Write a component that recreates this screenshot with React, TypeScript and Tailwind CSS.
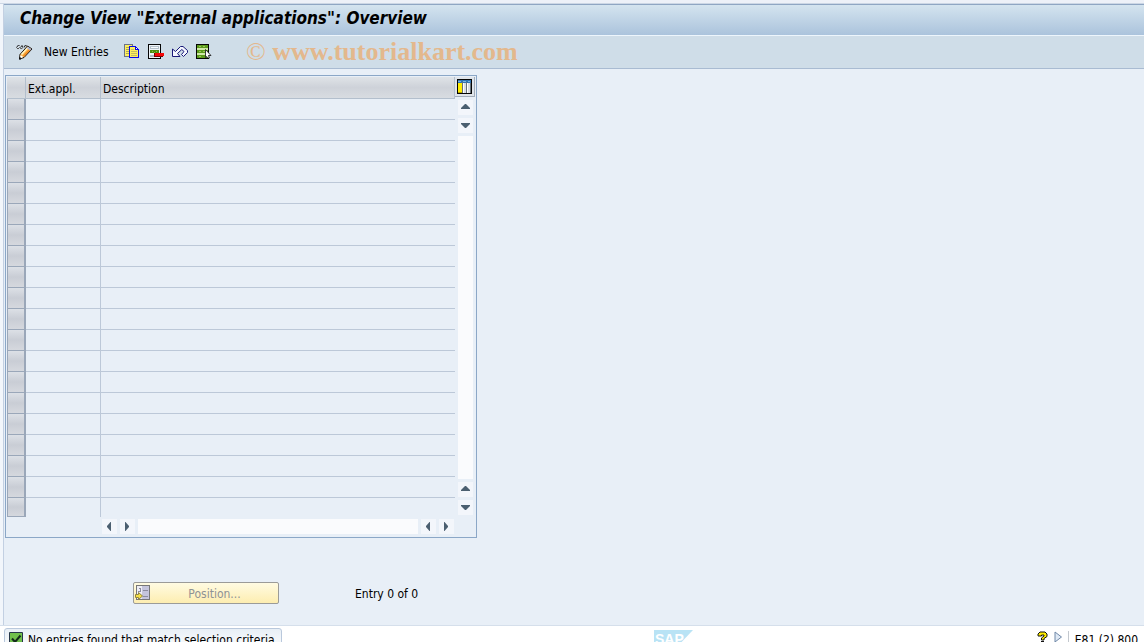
import type { ReactNode } from "react";

function Glyph({ children, w = 16, h = 16 }: { children: ReactNode; w?: number; h?: number }) {
  return (
    <svg aria-hidden="true" width={w} height={h} viewBox={`0 0 ${w} ${h}`} className="block shrink-0">
      {children}
    </svg>
  );
}

function ChangeIcon() {
  return (
    <Glyph w={17}>
      <path d="M0.500 3.500L2.500 1L3.500 2M4.500 3.500L6 1.500L7 3M8 3.500L9.500 1L11 2.500" fill="none" stroke="#222" strokeWidth="1" />
      <path d="M0.500 3.500q1.500 3 3 0q1.500 2.500 3.500 0" fill="none" stroke="#555" strokeWidth="1" />
      <path d="M4 10.500L11.500 2L16 5L8 13.500L3.500 15Z" fill="#ffb347" stroke="#111" strokeWidth="1" />
      <path d="M5.500 10.500L12 3.500" stroke="#fff6c8" strokeWidth="1.500" />
      <path d="M7.500 12.300L14 5.500" stroke="#f08a24" strokeWidth="1.500" />
      <path d="M12 2.700L15.400 5L14 6.500L10.800 4Z" fill="#a9b3d6" />
      <path d="M4.500 11L7.300 13L4 14.500Z" fill="#fff" />
      <path d="M3 13.500h2v2h-2z" fill="#111" />
    </Glyph>
  );
}

function CopyIcon() {
  return (
    <Glyph>
      <g shapeRendering="crispEdges">
        <path d="M0 0h9v13H0z" fill="#6b7486" />
        <path d="M1 1h7v11H1z" fill="#fff05c" />
        <path d="M2 3h3v1H2zM2 5h3v1H2zM2 7h3v1H2zM2 9h3v1H2z" fill="#aaa55c" />
        <path d="M5 2h7v1h1v1h1v1h1v9H5z" fill="#0808e8" />
        <path d="M6 3h5v3h3v7H6z" fill="#fff05c" />
        <path d="M12 4h1v1h-1z" fill="#fff" />
        <path d="M7 5h3v1H7zM7 7h6v1H7zM7 9h6v1H7zM7 11h6v1H7z" fill="#c4bd62" />
      </g>
    </Glyph>
  );
}

function DeleteIcon() {
  return (
    <Glyph>
      <g shapeRendering="crispEdges">
        <path d="M0 0h13v15H0z" fill="#050505" />
        <path d="M1 1h11v13H1z" fill="#edf3f7" />
        <path d="M2 2h9v3H2z" fill="#b5c1cb" />
        <path d="M3 3h7v1H3z" fill="#f8fbfd" />
        <path d="M2 6h9v3H2z" fill="#4c8d0d" />
        <path d="M4 7h1v1H4zM6 8h1v1H6zM8 7h1v1H8z" fill="#91bd44" />
        <path d="M2 11h5v2H2z" fill="#aeb9c2" />
        <path d="M6 9h9v4H6z" fill="#700" />
        <path d="M7 9h9v3H7z" fill="#f40808" />
      </g>
    </Glyph>
  );
}

function UndoIcon() {
  return (
    <Glyph>
      <path
        d="M0.500 12.500V5L3.500 7.500L8.500 2.500H11L15.500 6.500V8.500L11.500 12.500L9.500 10.500L12 7.500L9.800 5.500L5.500 9.500L8 12.500Z"
        fill="#f5f7ff"
        stroke="#191978"
        strokeWidth="1"
      />
    </Glyph>
  );
}

function SelectAllIcon() {
  return (
    <Glyph>
      <g shapeRendering="crispEdges">
        <path d="M0 0h13v15H0z" fill="#050505" />
        <path d="M1 1h11v13H1z" fill="#cfe8a6" />
        <path d="M1 1h11v3H1zM1 6h11v3H1zM1 11h11v3H1z" fill="#5b9a1c" />
        <path d="M3 2h2v1H3zM7 2h2v1H7zM3 7h2v1H3zM7 7h2v1H7zM3 12h2v1H3z" fill="#9cc75a" />
      </g>
      <path d="M9.500 5.500L15 11.500H12.500L13.500 14H11.500L10.800 12.500L9.500 13.500Z" fill="#fff" stroke="#111" strokeWidth="0.800" />
    </Glyph>
  );
}

function ColumnsIcon() {
  return (
    <Glyph w={15} h={15}>
      <g shapeRendering="crispEdges">
        <path d="M0 0h15v15H0z" fill="#050505" />
        <path d="M1 1h13v13H1z" fill="#d9dee3" />
        <path d="M1 1h13v3H1z" fill="#2e75b6" />
        <path d="M1 2h3v1H1zM6 2h3v1H6zM11 2h2v1h-2z" fill="#79b4dc" />
        <path d="M1 4h4v9H1z" fill="#ffed00" />
        <path d="M1 13h4v1H1z" fill="#b8a400" />
        <path d="M5 3h1v11H5zM9 3h1v11H9zM13 4h1v10h-1z" fill="#66717a" />
        <path d="M6 4h1v10H6zM10 4h1v10h-1z" fill="#fff" />
      </g>
    </Glyph>
  );
}

function PositionIcon() {
  return (
    <Glyph>
      <g shapeRendering="crispEdges">
        <path d="M1 0h14v15H1z" fill="#777" />
        <path d="M2 1h12v13H2z" fill="#c5c5dd" />
        <path d="M2 1h5v13H2z" fill="#eeeef5" />
        <path d="M4 3h2v1H4zM5 4h1v3H5zM3 6h2v1H3zM8 5h5v1H8zM8 11h5v1H8z" fill="#8c8ca0" />
      </g>
      <path d="M0.500 9.500H3.500V7.500L7.500 11L3.500 14.500V12.500H0.500Z" fill="#f5df45" stroke="#8f8340" strokeWidth="1" />
    </Glyph>
  );
}

const arrows = {
  up: "M3 9V8L7 4H8L12 8V9Z",
  down: "M3 5V6L7 10H8L12 6V5Z",
  left: "M9 3V12H8.500L5 8V7L8.500 3Z",
  right: "M5 3V12H5.500L9 8V7L5.500 3Z",
};

function ScrollButton({ dir }: { dir: keyof typeof arrows }) {
  return (
    <button type="button" aria-label={`Scroll ${dir}`} className="size-[15px] shrink-0 bg-[#f3f6fb]">
      <Glyph w={15} h={15}>
        <path d={arrows[dir]} fill="#4b5f70" />
      </Glyph>
    </button>
  );
}

const tools = [
  { label: "Copy As", icon: <CopyIcon /> },
  { label: "Delete", icon: <DeleteIcon /> },
  { label: "Undo", icon: <UndoIcon /> },
  { label: "Select All", icon: <SelectAllIcon /> },
];

const rows = Array.from({ length: 20 }, (_, i) => i);

const headCell =
  "h-[22px] border-r border-b border-[#b3bfcd] bg-linear-to-b from-[#dfe3e7] via-[#ced2d9] to-[#d8dce1] p-0 pt-0.5 text-left font-normal";

export default function App() {
  return (
    <div className="flex h-screen flex-col overflow-hidden bg-white font-['DejaVu_Sans_Condensed','DejaVu_Sans',sans-serif] text-[12px] leading-4 text-black">
      <div className="h-1 shrink-0 border-b border-[#ccd7e5] bg-[#edf1f8]" />
      <div className="flex min-h-0 flex-1 flex-col border-b border-[#d5dfeb] bg-[#f2f6fb] pl-[3px]">
        <div className="flex min-h-0 flex-1 flex-col border-l border-[#c3d0e2] bg-[#e8eff7]">
          <header className="flex h-8 shrink-0 items-center border-t border-b border-t-[#8fa6c3] border-b-[#edf5fc] bg-linear-to-b from-[#d4e4ef] to-[#abc3dc] pb-1 pl-4">
            <h1 className="text-[17px] leading-5 font-bold whitespace-nowrap italic">
              Change View "External applications": Overview
            </h1>
          </header>
          <div role="toolbar" aria-label="Application" className="flex h-[33px] shrink-0 items-center border-b border-[#a9bbd2] bg-[#cfdde8] pl-3">
            <button type="button" aria-label="Display / Change" className="w-4">
              <ChangeIcon />
            </button>
            <button type="button" className="ml-3 w-20 text-left whitespace-nowrap">
              New Entries
            </button>
            <div className="flex gap-2">
              {tools.map((t) => (
                <button key={t.label} type="button" aria-label={t.label}>
                  {t.icon}
                </button>
              ))}
            </div>
            <span className="ml-[34px] font-['Liberation_Serif',serif] text-[26px] leading-8 whitespace-nowrap text-[#e3b88d]">
              © <b>www.tutorialkart.com</b>
            </span>
          </div>

          <main className="min-h-0 flex-1 pt-1.5 pl-px">
            <section className="w-[472px] border border-[#8ba7c7] p-px pb-[3px]">
              <div className="flex">
                <table className="w-[448px] table-fixed border-separate border-spacing-0">
                  <colgroup>
                    <col className="w-[19px]" />
                    <col className="w-[75px]" />
                    <col />
                  </colgroup>
                  <thead>
                    <tr>
                      <th className={headCell} aria-label="Row selector" />
                      <th className={headCell}>
                        <span className="pl-0.5">Ext.appl.</span>
                      </th>
                      <th className={headCell}>
                        <span className="pl-0.5">Description</span>
                      </th>
                    </tr>
                  </thead>
                  <tbody>
                    {rows.map((r) => (
                      <tr key={r} className={r < 19 ? "h-[21px]" : "h-[19px]"}>
                        <td className="border-r-2 border-b border-l border-[#9aa7b9] bg-linear-to-b from-[#dce0e6] via-[#c9cdd5] to-[#d5d8de] p-0" />
                        <td className={r < 19 ? "border-r border-b border-[#bcc8d8] p-0" : "border-r border-[#bcc8d8] p-0"} />
                        <td className={r < 19 ? "border-b border-[#bcc8d8] p-0" : "p-0"} />
                      </tr>
                    ))}
                  </tbody>
                </table>
                <div className="flex w-5 flex-col items-center gap-[3px] pb-0.5">
                  <button type="button" aria-label="Table settings" className="flex h-5 w-full shrink-0 items-center justify-center border-r border-b border-[#a2adba] bg-[#dfe4ea]">
                    <ColumnsIcon />
                  </button>
                  <ScrollButton dir="up" />
                  <ScrollButton dir="down" />
                  <div className="w-[15px] flex-1 bg-[#fafbfd]" />
                  <ScrollButton dir="up" />
                  <ScrollButton dir="down" />
                </div>
              </div>
              <div className="mt-0.5 flex gap-[3px] pr-[21px] pl-[95px]">
                <ScrollButton dir="left" />
                <ScrollButton dir="right" />
                <div className="h-[15px] flex-1 bg-[#fafbfd]" />
                <ScrollButton dir="left" />
                <ScrollButton dir="right" />
              </div>
            </section>

            <div className="mt-11 flex items-center gap-[76px] pl-32">
              <button
                type="button"
                disabled
                className="flex h-[22px] w-[146px] items-center rounded-[2px] border border-[#9b9b98] bg-linear-to-b from-[#fffbe2] to-[#fdedb0] pl-px text-[#8f9294]"
              >
                <PositionIcon />
                <span className="flex-1 pt-px text-center">Position...</span>
              </button>
              <span className="pt-px whitespace-nowrap">Entry 0 of 0</span>
            </div>
          </main>
        </div>
      </div>

      <footer className="flex h-4 shrink-0 items-start overflow-hidden bg-white pl-1">
        <div className="mt-0.5 flex h-6 w-[278px] shrink-0 gap-[5px] rounded-t-[3px] border border-[#b9c8dc] bg-linear-to-b from-[#e8eff6] to-white pt-[3px] pl-1">
          <Glyph w={14} h={14}>
            <path d="M0.500 0.500h13v13H0.500z" fill="#70c04c" stroke="#26364a" />
            <path d="M3 6.500L6 10L11.500 3.500" fill="none" stroke="#132a1b" strokeWidth="2" />
          </Glyph>
          <span className="whitespace-nowrap">No entries found that match selection criteria</span>
        </div>
        <svg role="img" aria-label="SAP" width="39" height="20" viewBox="0 0 39 20" className="mt-1 ml-auto shrink-0">
          <path d="M0 0H39L20 20H0Z" fill="#b9e3f5" />
          <text x="1" y="14" fill="#fff" className="font-['Liberation_Sans',sans-serif] text-[14px] font-bold">
            SAP
          </text>
        </svg>
        <div className="ml-[344px] flex shrink-0 pt-[5px] pr-1.5">
          <Glyph w={11} h={14}>
            <path d="M1 4.500V3L3 1H8L10 3V5.500L7 7.500V9H4.500V7L7 5V4H4.500V5H1Z" fill="#ffed00" stroke="#111" />
            <path d="M4 10h3v3H4z" fill="#111" />
          </Glyph>
          <div className="ml-1.5">
            <Glyph w={9} h={12}>
              <path d="M1 1V11L7.500 6Z" fill="#dfe9f5" stroke="#7189a8" />
            </Glyph>
          </div>
          <span className="ml-[5px] border-l border-[#c3c8ce] pt-px pl-1.5 whitespace-nowrap">E81 (2) 800</span>
        </div>
      </footer>
    </div>
  );
}
